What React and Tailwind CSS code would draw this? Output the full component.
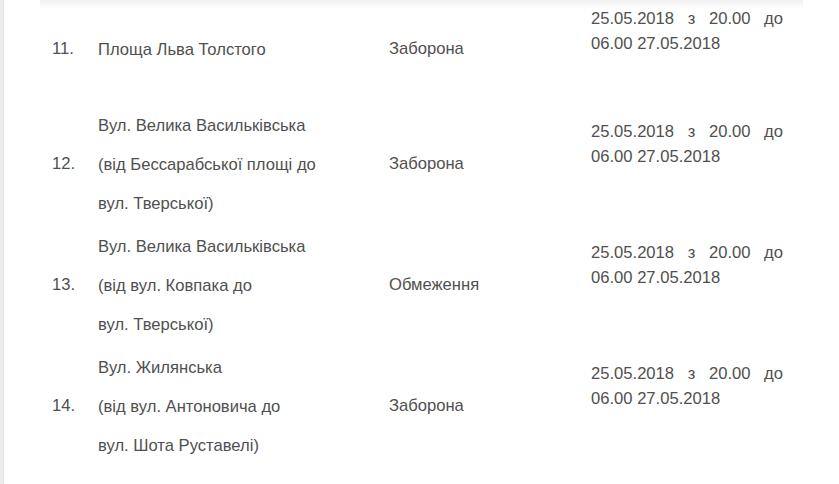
import React from "react";

const rows = [
  { n: "11.", desc: ["Площа Льва Толстого"], type: "Заборона", h: "h-[104px]", first: true },
  { n: "12.", desc: ["Вул. Велика Васильківська", "(від Бессарабської площі до", "вул. Тверської)"], type: "Заборона", h: "h-[121px]" },
  { n: "13.", desc: ["Вул. Велика Васильківська", "(від вул. Ковпака до", "вул. Тверської)"], type: "Обмеження", h: "h-[121px]" },
  { n: "14.", desc: ["Вул. Жилянська", "(від вул. Антоновича до", "вул. Шота Руставелі)"], type: "Заборона", h: "h-[121px]" },
];

function DateCell({ first }) {
  return (
    <div className={"self-start leading-[25px] " + (first ? "pt-[6px]" : "pt-[15px]")}>
      <div className="flex justify-between">
        <span>25.05.2018</span>
        <span>з</span>
        <span>20.00</span>
        <span>до</span>
      </div>
      <div>06.00 27.05.2018</div>
    </div>
  );
}

export default function App() {
  return (
    <div className="flex w-[839px] h-[484px] overflow-hidden bg-white text-[16.6px] text-[#505050] font-['Liberation_Sans',Arial,sans-serif]">
      {/* left page gutter */}
      <div className="w-[4px] shrink-0 bg-[#ececec] border-r border-[#e2e2e2]" />

      <div className="relative flex-1">
        {/* fade from the previous row */}
        <div className="absolute left-[36px] top-0 w-[763px] h-[9px] bg-linear-to-b from-[#f1f1f1] to-white pointer-events-none" />

        {rows.map((r) => (
          <div
            key={r.n}
            className={"grid grid-cols-[94px_291px_202px_192px] items-center " + r.h + (r.first ? " pb-[6px]" : "")}
          >
            <div className="pl-[48px]">{r.n}</div>
            <div className="leading-[39px]">
              {r.desc.map((d) => (
                <div key={d}>{d}</div>
              ))}
            </div>
            <div>{r.type}</div>
            <DateCell first={r.first} />
          </div>
        ))}
      </div>
    </div>
  );
}
